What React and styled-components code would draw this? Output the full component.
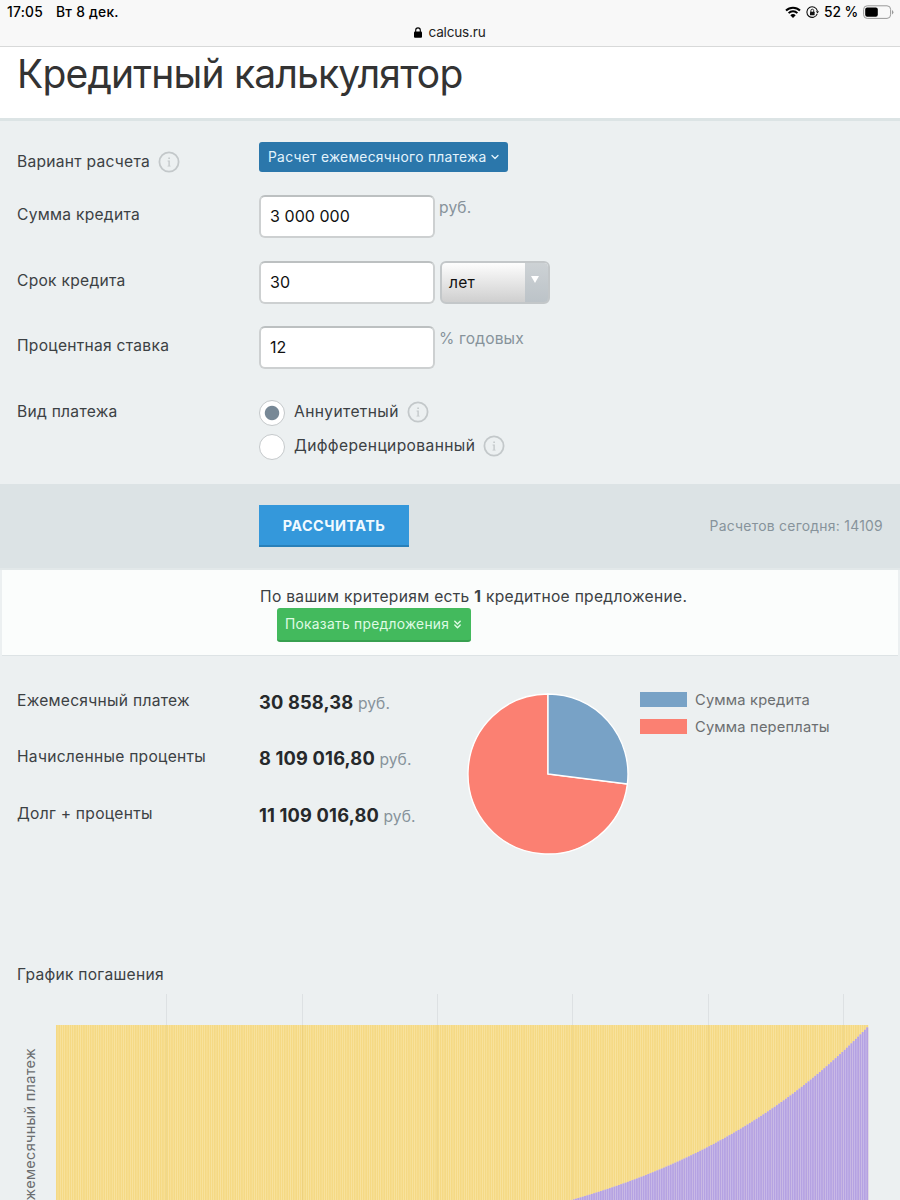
import styled, { createGlobalStyle } from "styled-components"
import { ChevronDown, ChevronsDown } from "lucide-react"

const MONTHS = 360
const RATE = 0.01
const STEP = 812.5 / MONTHS
const FULL = 239.3

const results = [
    { label: "Ежемесячный платеж", value: "30 858,38" },
    { label: "Начисленные проценты", value: "8 109 016,80" },
    { label: "Долг + проценты", value: "11 109 016,80" },
]

function Info() {
    return (
        <InfoIcon viewBox="0 0 22 22">
            <circle cx="11" cy="11" r="9.6" fill="none" stroke="#c3c8ca" strokeWidth="1.8" />
            <path d="M10.3 6.6h1.6v1.5h-1.6zM9.6 9.6h2.2v5.2h.8v.8H9.5v-.8h.9v-4.4h-.8z" fill="#c3c8ca" />
        </InfoIcon>
    )
}

function Status() {
    return (
        <StatusBar>
            <StatusSide>
                <Small>17:05</Small>
                <Small>Вт 8 дек.</Small>
            </StatusSide>
            <StatusSide $right>
                <svg width="16" height="12" viewBox="0 0 16 12">
                    <path d="M1 4.5a10 10 0 0 1 14 0" fill="none" stroke="#000" strokeWidth="2" />
                    <path d="M3.6 7.1a6.2 6.2 0 0 1 8.8 0" fill="none" stroke="#000" strokeWidth="1.9" />
                    <path d="M8 12 5.3 9.3a3.8 3.8 0 0 1 5.4 0z" fill="#000" />
                </svg>
                <svg width="13" height="13" viewBox="0 0 13 13">
                    <path d="M11.2 7.9A5.3 5.3 0 1 1 11.4 5" fill="none" stroke="#111" strokeWidth="1.1" />
                    <path d="M9.9 5.3h3.1l-1.5 2.3z" fill="#111" />
                    <rect x="4" y="5.8" width="4.6" height="3.5" rx=".4" fill="#111" />
                    <path d="M4.9 6V4.6a1.4 1.4 0 0 1 2.8 0V6" fill="none" stroke="#111" strokeWidth=".9" />
                </svg>
                <Small $percent>52 %</Small>
                <svg width="31" height="14" viewBox="0 0 31 14">
                    <rect x=".6" y=".8" width="27" height="12.6" rx="3.6" fill="none" stroke="#999" />
                    <rect x="2.2" y="2.4" width="12.6" height="9.4" rx="2" fill="#000" />
                    <path d="M29 5v4.4q1.4-.7 1.4-2.2T29 5z" fill="#999" />
                </svg>
            </StatusSide>
        </StatusBar>
    )
}

function Pie() {
    const angle = (3000000 / 11109016.8) * Math.PI * 2
    const x = 81 + 80 * Math.sin(angle)
    const y = 81 - 80 * Math.cos(angle)
    return (
        <svg width="162" height="162" viewBox="0 0 162 162" stroke="#fff" strokeWidth="1.4">
            <path d={`M81 81L${x} ${y}A80 80 0 1 1 81 1z`} fill="#fb8072" />
            <path d={`M81 81V1A80 80 0 0 1 ${x} ${y}z`} fill="#78a2c6" />
        </svg>
    )
}

function Schedule() {
    const bars = Array.from({ length: MONTHS }, (_, i) => {
        const debt = FULL * Math.pow(1 + RATE, i - MONTHS)
        return { x: 1 + i * STEP, top: 31 + FULL - debt, debt }
    })
    return (
        <svg width="840" height="206" viewBox="0 0 840 206">
            <rect x="1" y="31" width="812.5" height="175" fill="#faeab3" />
            {bars.map((b) => <rect key={b.x} x={b.x} y={b.top} width={STEP + 0.1} height={b.debt} fill="#d6cbf0" />)}
            {bars.map((b) => <rect key={b.x} x={b.x} y="31" width={STEP * 0.78} height={b.top - 31} fill="#f5d984" />)}
            {bars.map((b) => <rect key={b.x} x={b.x} y={b.top} width={STEP * 0.78} height={b.debt} fill="#b5a2e2" />)}
            {[49, 109, 169, 229, 289, 349].map((m) => (
                <g key={m}>
                    <rect x={Math.floor(1 + m * STEP)} y="0" width="1" height="31" fill="#dde1e3" />
                    <rect x={Math.floor(1 + m * STEP)} y="31" width="1" height={bars[m].top - 31} fill="#dcbf6b" opacity=".3" />
                </g>
            ))}
        </svg>
    )
}

export default function App() {
    return (
        <Page>
            <GlobalStyle />
            <Browser>
                <Status />
                <Address>
                    <svg width="8" height="11" viewBox="0 0 8 11">
                        <rect y="4.6" width="8" height="6.2" rx="1" fill="#000" />
                        <path d="M1.7 5V3.2a2.3 2.3 0 0 1 4.6 0V5" fill="none" stroke="#000" strokeWidth="1.1" />
                    </svg>
                    calcus.ru
                </Address>
            </Browser>
            <Header>
                <Title>Кредитный калькулятор</Title>
            </Header>
            <Form>
                <Row $height={53}>
                    <Label $top={9}>Вариант расчета <Info /></Label>
                    <Variant>
                        Расчет ежемесячного платежа
                        <ChevronDown size={12} strokeWidth={2.6} />
                    </Variant>
                </Row>
                <Row $height={65.7}>
                    <Label $top={9}>Сумма кредита</Label>
                    <Input defaultValue="3 000 000" />
                    <Unit>руб.</Unit>
                </Row>
                <Row $height={65.7}>
                    <Label $top={9}>Срок кредита</Label>
                    <Input defaultValue="30" />
                    <Select>
                        <span>лет</span>
                        <Arrow><svg width="8" height="7" viewBox="0 0 8 7"><path d="M0 0h8L4 7z" fill="#fff" /></svg></Arrow>
                    </Select>
                </Row>
                <Row $height={65.7}>
                    <Label $top={9}>Процентная ставка</Label>
                    <Input defaultValue="12" />
                    <Unit>% годовых</Unit>
                </Row>
                <Row $height={91}>
                    <Label $top={9}>Вид платежа</Label>
                    <Radios>
                        <Option><Radio $checked /><OptionText>Аннуитетный <Info /></OptionText></Option>
                        <Option><Radio /><OptionText>Дифференцированный <Info /></OptionText></Option>
                    </Radios>
                </Row>
            </Form>
            <Actions>
                <Calculate>РАССЧИТАТЬ</Calculate>
                <Counter>Расчетов сегодня: 14109</Counter>
            </Actions>
            <Offers>
                <p>По вашим критериям есть <b>1</b> кредитное предложение.</p>
                <Show>
                    Показать предложения
                    <ChevronsDown size={13} strokeWidth={2.6} />
                </Show>
            </Offers>
            <Results>
                <Totals>
                    {results.map((item) => (
                        <Total key={item.label}>
                            <Label $top={0}>{item.label}</Label>
                            <Value><strong>{item.value}</strong> руб.</Value>
                        </Total>
                    ))}
                </Totals>
                <Pie />
                <Legend>
                    <LegendItem><Swatch $color="#78a2c6" />Сумма кредита</LegendItem>
                    <LegendItem><Swatch $color="#fb8072" />Сумма переплаты</LegendItem>
                </Legend>
            </Results>
            <ChartTitle>График погашения</ChartTitle>
            <Chart>
                <Axis>Ежемесячный платеж</Axis>
                <Schedule />
            </Chart>
        </Page>
    )
}

const GlobalStyle = createGlobalStyle`
    * {
        box-sizing: border-box;
    }
    body {
        margin: 0;
        overflow: hidden;
    }
    p, h1 {
        margin: 0;
    }
    svg {
        flex-shrink: 0;
    }
`
const Page = styled.div`
    width: 900px;
    height: 1200px;
    overflow: hidden;
    background-color: #ecf0f1;
    color: #3c4144;
    font-family: Inter, sans-serif;
    font-size: 15.6px;
    line-height: 22px;
    letter-spacing: 0.27px;
`
const Browser = styled.div`
    height: 47px;
    background-color: #f8f8f8;
    border-bottom: 1px solid #d8d9d9;
    color: #000;
    line-height: 20px;
`
const StatusBar = styled.div`
    height: 24px;
    display: flex;
    justify-content: space-between;
    padding: 0 6px 0 7px;
`
const StatusSide = styled.div`
    display: flex;
    align-items: center;
    gap: ${({ $right }) => $right ? "5px" : "13px"};
`
const Small = styled.span`
    font-size: 13.8px;
    font-weight: 500;
    letter-spacing: ${({ $percent }) => $percent ? "-0.1px" : "0.25px"};
`
const Address = styled.div`
    display: flex;
    justify-content: center;
    align-items: center;
    gap: 6px;
    height: 16px;
    font-size: 13.6px;
    letter-spacing: -0.2px;
    color: #222;
`
const Header = styled.header`
    height: 74px;
    padding: 3px 17px 0;
    background-color: #fff;
    border-bottom: 3px solid #dce4e5;
`
const Title = styled.h1`
    font-size: 39px;
    line-height: 48px;
    font-weight: 400;
    letter-spacing: -0.8px;
    color: #333;
`
const Form = styled.form`
    height: 363px;
    padding: 21px 17px 0;
`
const Row = styled.div`
    display: flex;
    align-items: flex-start;
    height: ${({ $height }) => $height}px;
`
const Label = styled.div`
    width: 242px;
    flex-shrink: 0;
    display: flex;
    gap: 8px;
    padding-top: ${({ $top }) => $top}px;
`
const InfoIcon = styled.svg`
    width: 22px;
    height: 22px;
`
const Variant = styled.div`
    display: flex;
    align-items: center;
    gap: 2px;
    width: 249px;
    height: 30px;
    padding: 0 9px;
    border-radius: 3px;
    background-color: #2b77ab;
    color: #e3f3fc;
    font-size: 13.8px;
    line-height: 20px;
    letter-spacing: 0.29px;
    white-space: nowrap;
`
const Input = styled.input`
    width: 176px;
    height: 43px;
    padding: 0 9px 1px;
    border: 2px solid #cdd0d1;
    border-top-color: #bcc0c1;
    border-radius: 6px;
    background-color: #fff;
    color: #111;
    font-family: inherit;
    font-size: 16px;
    letter-spacing: 0.05px;
`
const Unit = styled.span`
    margin: 2px 0 0 4px;
    color: #87939b;
    letter-spacing: 0.15px;
`
const Select = styled.div`
    display: flex;
    width: 110px;
    height: 43px;
    margin-left: 5px;
    border: 2px solid #c3c7c9;
    border-radius: 6px;
    overflow: hidden;
    background: linear-gradient(#fdfdfd, #cfcfcf);
    color: #111;

    && > span {
        flex: 1;
        padding: 9px 0 0 7px;
    }
`
const Arrow = styled.div`
    width: 23px;
    padding: 13px 0 0 6px;
    background: linear-gradient(#cdd2d5, #bcc3c8);
    line-height: 0;
`
const Radios = styled.div`
    padding-top: 8px;
`
const Option = styled.div`
    display: flex;
    height: 34px;
    gap: 9px;
`
const OptionText = styled.div`
    display: flex;
    gap: 8px;
    padding-top: 1px;
    letter-spacing: 0.37px;
`
const Radio = styled.span`
    width: 26px;
    height: 26px;
    border: 1px solid #c5c9cb;
    border-radius: 50%;
    background: ${({ $checked }) => $checked ? "radial-gradient(circle, #778896 6.7px, #fff 7.7px)" : "#fff"};
`
const Actions = styled.div`
    display: flex;
    justify-content: space-between;
    height: 86px;
    padding: 21px 17px 0 259px;
    background-color: #dce3e5;
    border-bottom: 2px solid #e2e8e9;
`
const Calculate = styled.div`
    width: 150px;
    height: 42px;
    border-bottom: 2px solid #2980b9;
    background-color: #3498db;
    color: #f0faff;
    font-size: 14.4px;
    font-weight: 700;
    line-height: 41px;
    letter-spacing: 0.5px;
    text-align: center;
`
const Counter = styled.p`
    padding-top: 11px;
    color: #87939b;
    font-size: 13.9px;
    line-height: 20px;
    letter-spacing: 0.27px;
`
const Offers = styled.div`
    height: 86px;
    margin: 0 2px;
    padding: 16px 0 0 258px;
    background-color: #fbfdfc;
    border-bottom: 1px solid #dde3e5;
    letter-spacing: 0.3px;
`
const Show = styled.div`
    display: flex;
    align-items: center;
    gap: 2px;
    width: 194px;
    height: 34px;
    margin-left: 17px;
    padding: 0 8px;
    border-bottom: 2px solid #37a04f;
    border-radius: 3px;
    background-color: #43ba5d;
    color: #dffbe4;
    font-size: 13.8px;
    line-height: 20px;
    letter-spacing: 0.28px;
    white-space: nowrap;
`
const Results = styled.div`
    display: flex;
    height: 308px;
    padding: 34px 0 0 17px;

    && > svg {
        margin-top: 3px;
    }
`
const Totals = styled.div`
    width: 449.5px;
`
const Total = styled.div`
    display: flex;
    height: 56.4px;
`
const Value = styled.div`
    padding-top: 2px;
    color: #87939b;
    line-height: 20px;
    letter-spacing: 0.1px;

    && strong {
        color: #26292b;
        font-size: 18.3px;
        font-weight: 700;
        letter-spacing: 0.16px;
    }
`
const Legend = styled.div`
    padding: 0 0 0 11.5px;
    color: #6b6e70;
    font-size: 14.7px;
    line-height: 20px;
    letter-spacing: 0.18px;
`
const LegendItem = styled.div`
    display: flex;
    align-items: center;
    gap: 8px;
    height: 27px;

    &&:first-child {
        margin-top: -4px;
    }
`
const Swatch = styled.span`
    width: 47px;
    height: 15px;
    background-color: ${({ $color }) => $color};
`
const ChartTitle = styled.p`
    height: 30px;
    padding-left: 17px;
`
const Chart = styled.div`
    display: flex;
    height: 206px;
    padding-left: 20px;
`
const Axis = styled.div`
    width: 35px;
    flex-shrink: 0;
    align-self: flex-start;
    margin-top: 54px;
    padding-left: 14px;
    writing-mode: vertical-rl;
    transform: rotate(180deg);
    white-space: nowrap;
    color: #6b6e70;
    font-size: 14.5px;
    line-height: 20px;
    letter-spacing: 0.3px;
`
